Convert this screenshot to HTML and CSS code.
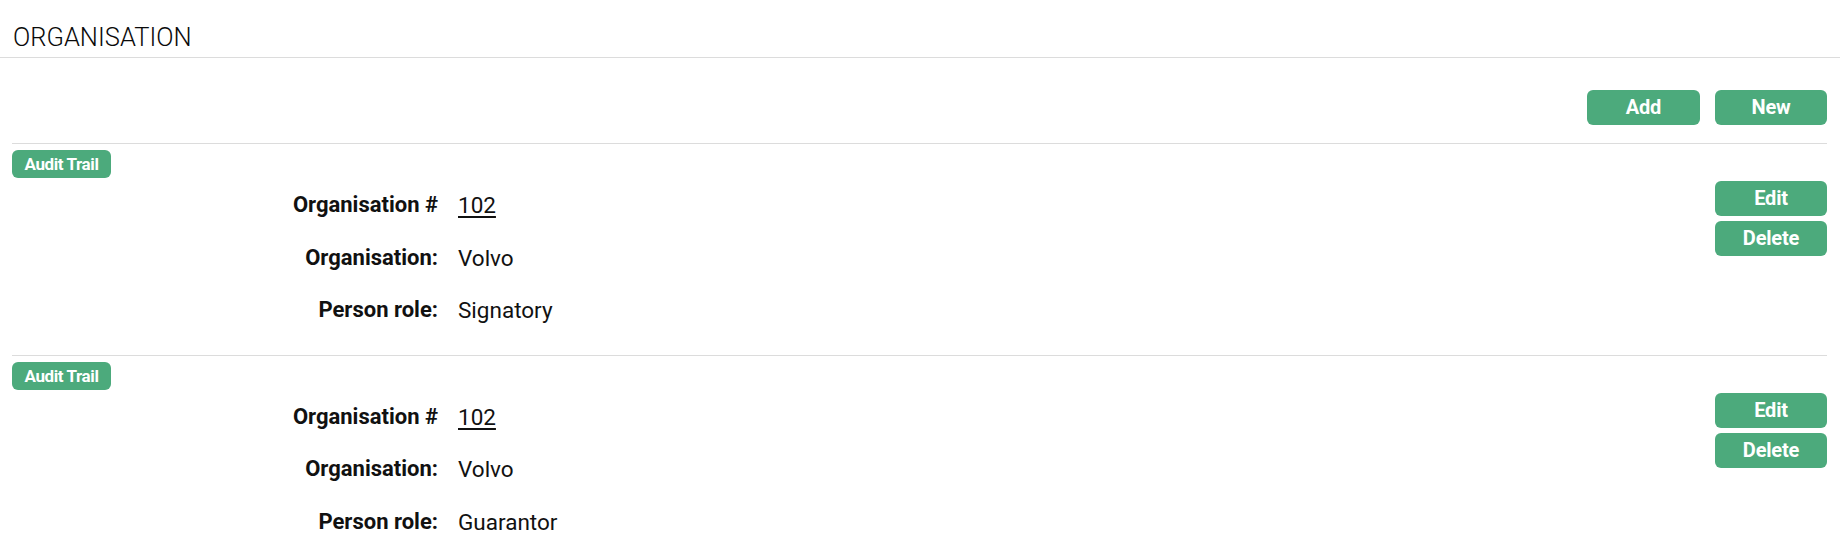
FILE: index.html
```html
<!DOCTYPE html>
<html lang="en">
<head>
<meta charset="utf-8">
<title>Organisation</title>
<link rel="stylesheet" href="styles.css">
</head>
<body>
  <header class="page-header">
    <h1 class="page-title">ORGANISATION</h1>
  </header>
  <main class="content">
    <div class="toolbar">
      <button class="btn btn-wide">Add</button>
      <button class="btn">New</button>
    </div>

    <section class="record">
      <div class="record-main">
        <button class="badge">Audit Trail</button>
        <dl class="fields">
          <dt>Organisation #</dt><dd><a class="link" href="#">102</a></dd>
          <dt>Organisation:</dt><dd>Volvo</dd>
          <dt>Person role:</dt><dd>Signatory</dd>
        </dl>
      </div>
      <div class="record-actions">
        <button class="btn">Edit</button>
        <button class="btn">Delete</button>
      </div>
    </section>

    <section class="record">
      <div class="record-main">
        <button class="badge">Audit Trail</button>
        <dl class="fields">
          <dt>Organisation #</dt><dd><a class="link" href="#">102</a></dd>
          <dt>Organisation:</dt><dd>Volvo</dd>
          <dt>Person role:</dt><dd>Guarantor</dd>
        </dl>
      </div>
      <div class="record-actions">
        <button class="btn">Edit</button>
        <button class="btn">Delete</button>
      </div>
    </section>
  </main>
</body>
</html>
```

FILE: styles.css
```css
* { box-sizing: border-box; }

html, body {
  margin: 0;
  padding: 0;
  background: #ffffff;
}

body {
  font-family: Roboto, "Liberation Sans", Arial, sans-serif;
  color: #111111;
}

.page-header {
  height: 58px;
  padding: 22px 13px 0 13px;
  border-bottom: 1px solid #dcdcdc;
}

.page-title {
  margin: 0;
  font-size: 25.5px;
  font-weight: 300;
  line-height: 30px;
  color: #0a0a0a;
}

.content {
  padding: 0 13px 0 12px;
}

.toolbar {
  display: flex;
  justify-content: flex-end;
  gap: 15px;
  padding: 32px 0 18px 0;
}

.btn {
  width: 112px;
  height: 35px;
  border: none;
  border-radius: 6px;
  background: #4caa7c;
  color: #ffffff;
  font-family: Roboto, "Liberation Sans", Arial, sans-serif;
  font-size: 20px;
  font-weight: 700;
  letter-spacing: -0.2px;
  line-height: 35px;
  padding: 0;
  cursor: pointer;
}

.btn-wide {
  width: 113px;
}

.record {
  display: flex;
  border-top: 1px solid #dcdcdc;
  padding: 6px 0 18px 0;
}

.record-main {
  flex: 1;
}

.badge {
  display: block;
  width: 99px;
  height: 28px;
  border: none;
  border-radius: 6px;
  background: #4caa7c;
  color: #ffffff;
  font-family: Roboto, "Liberation Sans", Arial, sans-serif;
  font-size: 17px;
  font-weight: 700;
  letter-spacing: -0.4px;
  line-height: 28px;
  padding: 0;
  cursor: pointer;
}

.fields {
  display: grid;
  grid-template-columns: 426px 1fr;
  column-gap: 20px;
  margin: 1px 0 0 0;
  font-size: 22px;
  line-height: 52.5px;
}

.fields dt {
  text-align: right;
  font-weight: 700;
}

.fields dd {
  margin: 0;
  font-weight: 400;
  font-size: 22.5px;
}

.link {
  color: #111111;
  text-decoration: underline;
  text-decoration-thickness: 2px;
  text-underline-offset: 3px;
}

.record-actions {
  display: flex;
  flex-direction: column;
  gap: 5px;
  padding-top: 31px;
}
```
